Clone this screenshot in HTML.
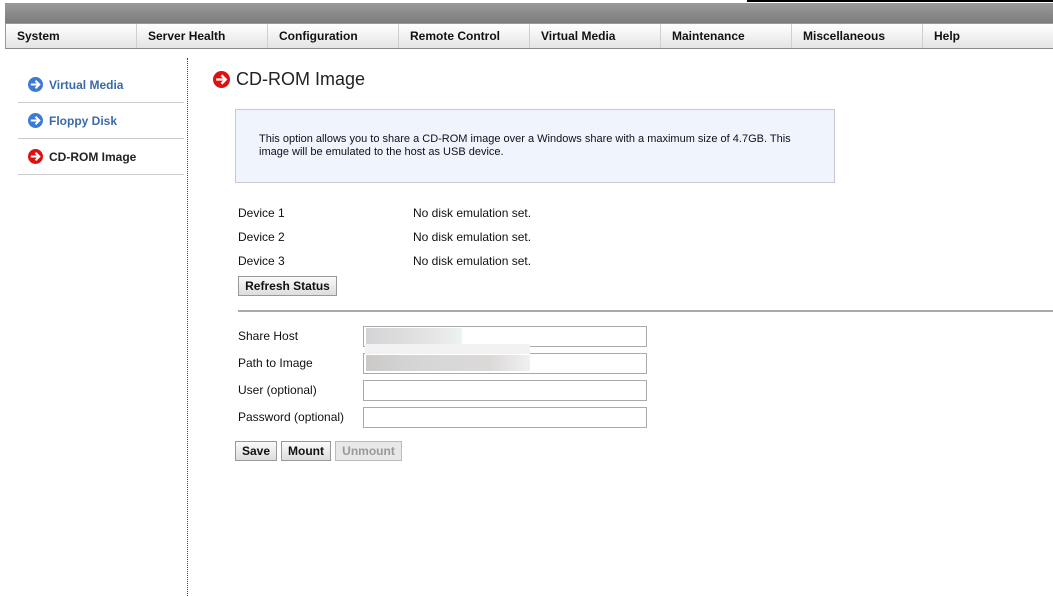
<!DOCTYPE html>
<html><head><style>
body{margin:0;width:1053px;height:596px;background:#fff;font-family:"Liberation Sans",Arial,sans-serif;position:relative;overflow:hidden}
.top{position:absolute;left:5px;top:3px;width:1048px;height:20px;background:linear-gradient(#9a9a9a,#7c7c7c)}
.blk{position:absolute;left:747px;top:-2px;width:302px;height:2px;border:2px solid #000;border-top:0;background:#fff}
.nav{position:absolute;left:5px;top:23px;width:1048px;height:24px;border-top:1px solid #999;border-bottom:1px solid #888;border-left:1px solid #999;background:linear-gradient(#fff,#e4e4e4);display:flex}
.nav div{border-right:1px solid #d0d0d0;font-size:12px;font-weight:bold;color:#111;padding-left:11px;box-sizing:border-box;line-height:24px;flex:none;width:131px}
.side{position:absolute;left:18px;top:67px;width:166px}
.side div{height:35px;border-bottom:1px solid #ccc;font-size:12px;font-weight:bold;color:#3a6aa8;display:flex;align-items:center;padding-left:10px}
.side div.a{color:#222}
.ic{display:inline-block;width:15px;height:15px;margin-right:6px}
.vline{position:absolute;left:187px;top:58px;height:538px;border-left:1px dotted #33c}
h1{position:absolute;left:213px;top:69px;margin:0;font-size:18px;font-weight:normal;color:#222;display:flex;align-items:center}
.info{position:absolute;left:235px;top:109px;width:598px;height:72px;border:1px solid #c8c8d4;background:#eff4fd;font-size:11px;color:#111}
.info p{margin:23px 0 0 23px;line-height:13px;width:560px}
.t{position:absolute;font-size:12px;color:#111}
.btn{position:absolute;font-size:12px;font-weight:bold;border:1px solid #999;background:linear-gradient(#fafafa,#ddd);height:20px;line-height:18px;text-align:center;color:#111;box-sizing:border-box}
.hr{position:absolute;left:238px;top:310px;width:815px;border-top:2px solid #aaa}
.in{position:absolute;left:363px;width:282px;height:19px;border:1px solid #aaa;background:#fff}
</style></head><body>
<div class="top"></div><div class="blk"></div>
<div class="nav"><div>System</div><div>Server Health</div><div>Configuration</div><div>Remote Control</div><div>Virtual Media</div><div>Maintenance</div><div>Miscellaneous</div><div style="border:0">Help</div></div>
<div class="side">
<div><svg class="ic" viewBox="0 0 16 16"><circle cx="8" cy="8" r="8" fill="#3a7ad8"/><path d="M3 8h8M8 4l4 4-4 4" stroke="#fff" stroke-width="2.2" fill="none"/></svg>Virtual Media</div>
<div><svg class="ic" viewBox="0 0 16 16"><circle cx="8" cy="8" r="8" fill="#3a7ad8"/><path d="M3 8h8M8 4l4 4-4 4" stroke="#fff" stroke-width="2.2" fill="none"/></svg>Floppy Disk</div>
<div class="a"><svg class="ic" viewBox="0 0 16 16"><circle cx="8" cy="8" r="8" fill="#e01010"/><path d="M3 8h8M8 4l4 4-4 4" stroke="#fff" stroke-width="2.2" fill="none"/></svg>CD-ROM Image</div>
</div>
<div class="vline"></div>
<h1><svg style="width:17px;height:17px;margin-right:6px" viewBox="0 0 16 16"><circle cx="8" cy="8" r="8" fill="#e01010"/><path d="M3 8h8M8 4l4 4-4 4" stroke="#fff" stroke-width="2.2" fill="none"/></svg>CD-ROM Image</h1>
<div class="info"><p>This option allows you to share a CD-ROM image over a Windows share with a maximum size of 4.7GB. This image will be emulated to the host as USB device.</p></div>
<div class="t" style="left:238px;top:206px">Device 1</div><div class="t" style="left:413px;top:206px">No disk emulation set.</div>
<div class="t" style="left:238px;top:230px">Device 2</div><div class="t" style="left:413px;top:230px">No disk emulation set.</div>
<div class="t" style="left:238px;top:254px">Device 3</div><div class="t" style="left:413px;top:254px">No disk emulation set.</div>
<div class="btn" style="left:238px;top:276px;width:99px">Refresh Status</div>
<div class="hr"></div>
<div class="t" style="left:238px;top:329px">Share Host</div>
<div class="t" style="left:238px;top:356px">Path to Image</div>
<div class="t" style="left:238px;top:383px">User (optional)</div>
<div class="t" style="left:238px;top:410px">Password (optional)</div>
<div class="in" style="top:326px"><div style="position:absolute;left:2px;top:1px;width:96px;height:16px;background:linear-gradient(90deg,#d4d4d8,#dcdcdc,#e4e4e4,#eef2f2)"></div></div>
<div class="in" style="top:353px"><div style="position:absolute;left:2px;top:1px;width:164px;height:16px;background:linear-gradient(90deg,#ccc9c6,#d4d4d6,#d8d8d8,#dcd8d8,#f0f0f2)"></div></div>
<div style="position:absolute;left:365px;top:344px;width:165px;height:10px;background:#f2f2f2"></div>
<div class="in" style="top:380px"></div>
<div class="in" style="top:407px"></div>
<div class="btn" style="left:235px;top:441px;width:42px">Save</div>
<div class="btn" style="left:281px;top:441px;width:50px">Mount</div>
<div class="btn" style="left:335px;top:441px;width:67px;color:#999;background:#e8e8e8;border-color:#bbb">Unmount</div>
</body></html>
